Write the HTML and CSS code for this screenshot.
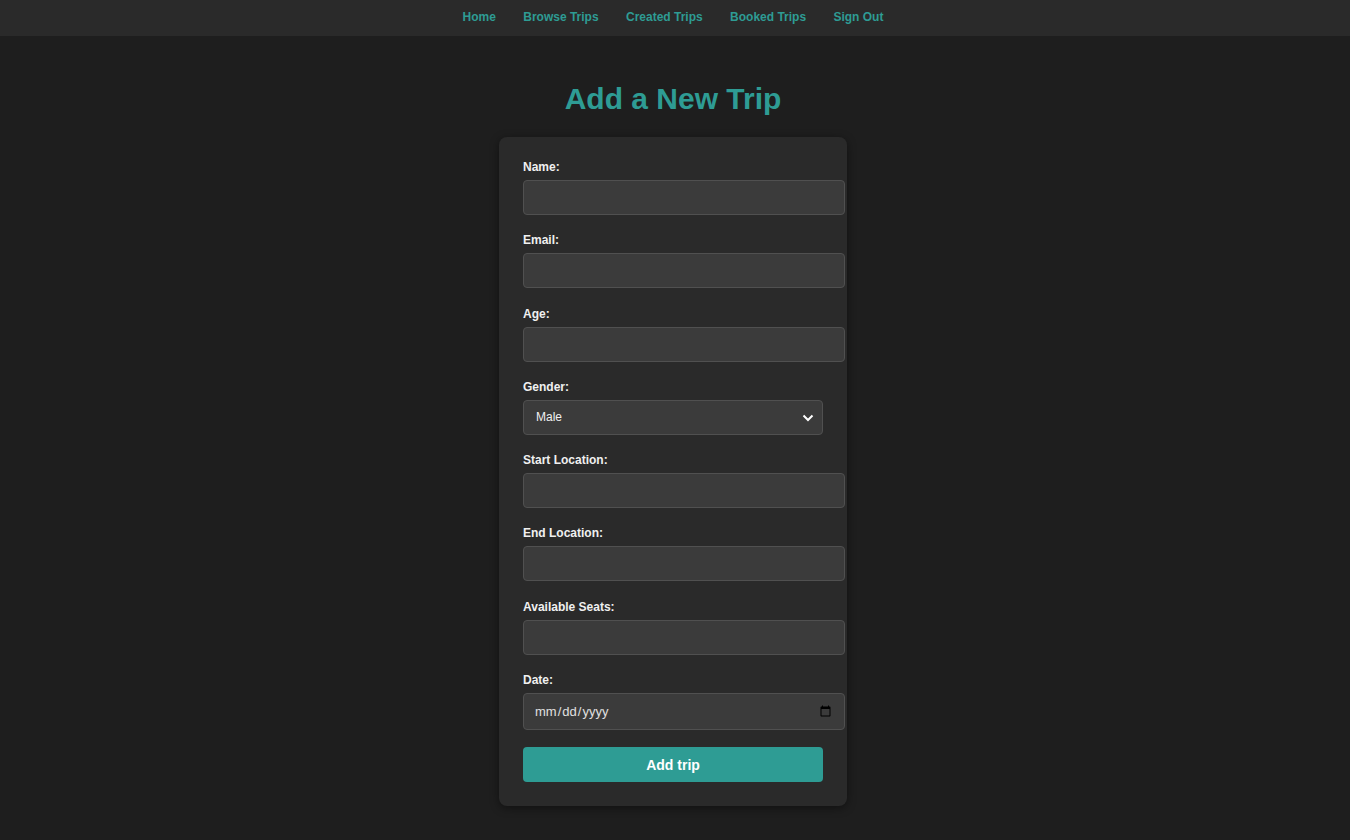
FILE: index.html
```html
<!DOCTYPE html>
<html lang="en">
<head>
<meta charset="utf-8">
<title>Add a New Trip</title>
<link rel="stylesheet" href="styles.css">
</head>
<body>
<nav class="topnav">
  <a href="#" class="navlink">Home</a>
  <a href="#" class="navlink">Browse Trips</a>
  <a href="#" class="navlink">Created Trips</a>
  <a href="#" class="navlink">Booked Trips</a>
  <a href="#" class="navlink">Sign Out</a>
</nav>
<main class="main">
  <h1 class="title">Add a New Trip</h1>
  <form class="card">
    <label class="lbl">Name:</label>
    <input class="field" type="text">
    <label class="lbl">Email:</label>
    <input class="field" type="email">
    <label class="lbl">Age:</label>
    <input class="field" type="text">
    <label class="lbl">Gender:</label>
    <div class="selwrap">
      <select class="sel">
        <option>Male</option>
        <option>Female</option>
      </select>
      <svg class="chev" width="12" height="8" viewBox="0 0 12 8"><path d="M1.5 1.5 L6 6 L10.5 1.5" fill="none" stroke="#fff" stroke-width="2"/></svg>
    </div>
    <label class="lbl">Start Location:</label>
    <input class="field" type="text">
    <label class="lbl">End Location:</label>
    <input class="field" type="text">
    <label class="lbl">Available Seats:</label>
    <input class="field" type="text">
    <label class="lbl">Date:</label>
    <input class="field datef" type="date">
    <button class="btn" type="button">Add trip</button>
  </form>
</main>
</body>
</html>
```
FILE: styles.css
```css
html, body {
  margin: 0;
  padding: 0;
  background: #1e1e1e;
  font-family: "Liberation Sans", Arial, sans-serif;
  color: #e8e8e8;
}
.topnav {
  height: 36px;
  box-sizing: border-box;
  padding: 0 4px 2px 0;
  background: #2a2a2a;
  display: flex;
  justify-content: center;
  align-items: center;
}
.navlink {
  color: #2e9c94;
  font-size: 12px;
  font-weight: bold;
  text-decoration: none;
  padding: 0 13.7px;
  line-height: 32px;
}
.main {
  display: flex;
  flex-direction: column;
  align-items: center;
  padding: 46px 4px 34px 0;
}
.title {
  margin: 0 0 21px;
  font-size: 30px;
  font-weight: bold;
  color: #2e9c94;
  line-height: 34px;
}
.card {
  width: 300px;
  padding: 23px 24px 24px;
  background: #2a2a2a;
  border-radius: 8px;
  box-shadow: 0 2px 10px rgba(0, 0, 0, 0.45);
  display: flex;
  flex-direction: column;
  align-items: flex-start;
}
.lbl {
  display: block;
  font-size: 12px;
  font-weight: bold;
  line-height: 14px;
  margin-bottom: 6px;
  color: #f0f0f0;
}
.field {
  box-sizing: content-box;
  width: 300px;
  height: 15px;
  padding: 9px 10px;
  margin: 0 0 18.3px;
  background: #3b3b3b;
  border: 1px solid #505050;
  border-radius: 4px;
  color: #e8e8e8;
  font-family: "Liberation Sans", Arial, sans-serif;
  font-size: 13px;
  outline: none;
}
.datef {
  height: 17px;
  font-size: 13px;
  color: #e0e0e0;
  margin-bottom: 17px;
}
.selwrap {
  position: relative;
  width: 300px;
  margin-bottom: 18.3px;
}
.sel {
  -webkit-appearance: none;
  appearance: none;
  display: block;
  box-sizing: border-box;
  width: 300px;
  height: 35px;
  padding: 0 30px 0 12px;
  background: #3b3b3b;
  border: 1px solid #505050;
  border-radius: 4px;
  color: #f0f0f0;
  font-family: "Liberation Sans", Arial, sans-serif;
  font-size: 12px;
  outline: none;
}
.chev {
  position: absolute;
  right: 9px;
  top: 14px;
  pointer-events: none;
}
.btn {
  width: 300px;
  height: 35px;
  background: #2e9c94;
  color: #fff;
  border: none;
  border-radius: 4px;
  font-family: "Liberation Sans", Arial, sans-serif;
  font-size: 14px;
  font-weight: bold;
}
```
